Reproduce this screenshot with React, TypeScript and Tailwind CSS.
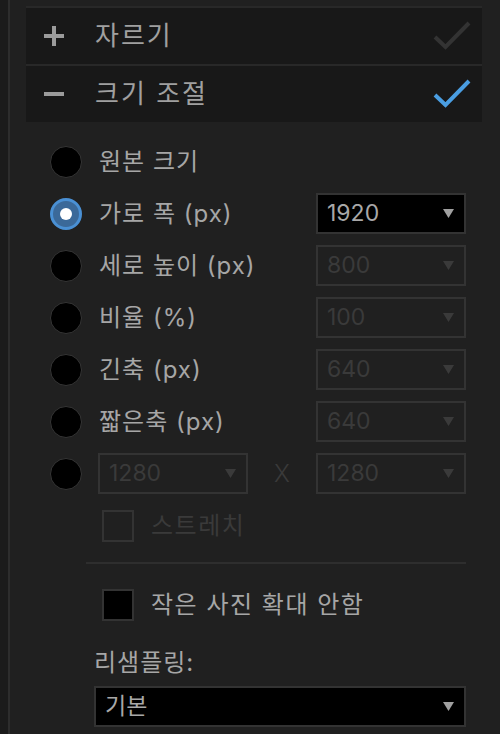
import { ReactNode } from "react"

const font = { fontFamily: 'Inter, "Noto Sans CJK KR", sans-serif' }

function Check({ color }: { color: string }) {
  return (
    <svg width="40" height="32" viewBox="0 0 40 32" className="shrink-0">
      <polyline points="3,17 13.5,27 37,3" fill="none" stroke={color} strokeWidth="4" />
    </svg>
  )
}

function Header({ open, label, active }: { open: boolean; label: string; active: boolean }) {
  return (
    <div className="flex items-center h-[58px] border-t-2 border-[#282828] bg-[#181818] pl-[18px] pr-[10px]">
      <div className="relative w-[20px] h-[20px] shrink-0">
        <span className="absolute left-0 top-[8px] w-[20px] h-[4px] bg-[#9b9b9b]"></span>
        {!open && <span className="absolute left-[8px] top-0 w-[4px] h-[20px] bg-[#9b9b9b]"></span>}
      </div>
      <span className="ml-[31px] text-[26px] tracking-[2px] text-[#a0a0a0] leading-none">{label}</span>
      <div className="ml-auto">
        <Check color={active ? "#4a9ee2" : "#333333"} />
      </div>
    </div>
  )
}

function Radio({ selected }: { selected?: boolean }) {
  if (selected) {
    return (
      <span className="flex items-center justify-center w-[32px] h-[32px] rounded-full border-[3px] border-[#4a90d4] bg-[#3b6999] shrink-0">
        <span className="w-[12px] h-[12px] rounded-full bg-white"></span>
      </span>
    )
  }
  return <span className="w-[32px] h-[32px] rounded-full border border-[#353535] bg-black shrink-0"></span>
}

function Select({ value, disabled, wide }: { value: string; disabled?: boolean; wide?: boolean }) {
  return (
    <div
      className={`flex items-center h-[41px] border-2 border-[#333333] pl-[9px] pr-[10px] ${
        wide ? "w-full" : "w-[150px]"
      } ${disabled ? "" : "bg-black"}`}
    >
      <span className={`text-[23px] leading-none ${disabled ? "text-[#3a3a3a]" : "text-[#a8a8a8]"}`}>{value}</span>
      <svg width="11" height="9" viewBox="0 0 11 9" className="ml-auto">
        <polygon points="0,0 11,0 5.5,9" fill={disabled ? "#3a3a3a" : "#a0a0a0"} />
      </svg>
    </div>
  )
}

function Row({ selected, label, children }: { selected?: boolean; label?: string; children?: ReactNode }) {
  return (
    <div className="flex items-center h-[41px]">
      <Radio selected={selected} />
      {label && <span className="ml-[17px] text-[24px] tracking-[1px] text-[#a6a6a6] leading-none">{label}</span>}
      <div className="ml-auto">{children}</div>
    </div>
  )
}

function Checkbox({ label, disabled }: { label: string; disabled?: boolean }) {
  return (
    <div className="flex items-center h-[32px] pl-[8px]">
      <span className={`w-[32px] h-[32px] border-2 border-[#333333] shrink-0 ${disabled ? "" : "bg-black"}`}></span>
      <span
        className={`ml-[17px] text-[24px] tracking-[1.5px] leading-none ${
          disabled ? "text-[#3a3a3a]" : "text-[#a6a6a6]"
        }`}
      >
        {label}
      </span>
    </div>
  )
}

export default function App() {
  return (
    <div className="flex w-[500px] h-[734px] overflow-hidden bg-[#202020]" style={font}>
      <div className="w-[10px] bg-[#1b1b1b] border-r-2 border-[#2d2d2d] shrink-0"></div>
      <div className="flex-1 pl-[16px] pr-[18px] pt-[6px]">
        <Header open={false} label="자르기" active={false} />
        <Header open={true} label="크기 조절" active={true} />

        <div className="pl-[24px] pr-[16px] pt-[19px]">
          <div className="flex flex-col gap-[11px]">
            <Row label="원본 크기" />
            <Row selected label="가로 폭 (px)">
              <Select value="1920" />
            </Row>
            <Row label="세로 높이 (px)">
              <Select value="800" disabled />
            </Row>
            <Row label="비율 (%)">
              <Select value="100" disabled />
            </Row>
            <Row label="긴축 (px)">
              <Select value="640" disabled />
            </Row>
            <Row label="짧은축 (px)">
              <Select value="640" disabled />
            </Row>
            <div className="flex items-center h-[41px]">
              <Radio />
              <div className="ml-[16px]">
                <Select value="1280" disabled />
              </div>
              <span className="flex-1 text-center text-[24px] font-light text-[#3a3a3a] leading-none">X</span>
              <Select value="1280" disabled />
            </div>
          </div>

          <div className="pl-[44px] mt-[16px]">
            <Checkbox label="스트레치" disabled />
            <div className="mt-[20px] h-[2px] bg-[#2e2e2e] -ml-[8px]"></div>
            <div className="mt-[25px]">
              <Checkbox label="작은 사진 확대 안함" />
            </div>
            <div className="mt-[30px] text-[24px] tracking-[1px] text-[#a6a6a6] leading-none">리샘플링:</div>
            <div className="mt-[11px]">
              <Select value="기본" wide />
            </div>
          </div>
        </div>
      </div>
    </div>
  )
}
